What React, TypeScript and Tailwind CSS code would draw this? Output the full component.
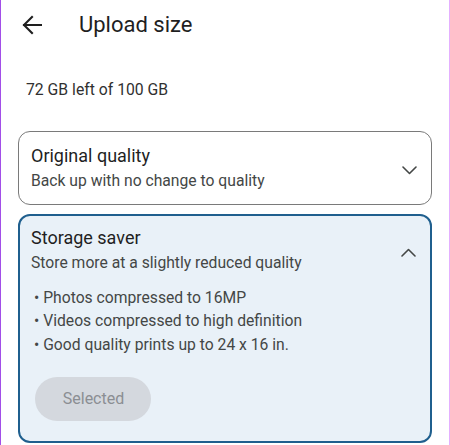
const bullets = [
  "Photos compressed to 16MP",
  "Videos compressed to high definition",
  "Good quality prints up to 24 x 16 in.",
];

function Chevron({ up }: { up?: boolean }) {
  return (
    <svg width="15" height="9" viewBox="0 0 15 9" fill="none" className="text-[#444746]">
      <polyline
        points={up ? "1,8 7.5,1.5 14,8" : "1,1 7.5,7.5 14,1"}
        stroke="currentColor"
        strokeWidth="1.6"
        strokeLinecap="round"
        strokeLinejoin="round"
      />
    </svg>
  );
}

export default function App() {
  return (
    <div className="h-[445px] w-[450px] overflow-hidden border-l border-r border-l-[#a24ee8] border-r-[#e4b0ff] bg-white font-['Roboto',sans-serif] text-[#1f1f1f]">
      <div className="flex h-[48px] items-center pl-[21px] pt-[1px]">
        <svg width="20" height="20" viewBox="0 0 20 20" fill="none" className="text-[#1f1f1f]">
          <path
            d="M19 10H2M10 2L2 10L10 18"
            stroke="currentColor"
            strokeWidth="2.1"
            strokeLinecap="square"
          />
        </svg>
        <h1 className="ml-[37px] text-[22px] leading-none">Upload size</h1>
      </div>

      <p className="mt-[34px] pl-[25px] text-[15.75px] leading-none text-[#303030]">
        72 GB left of 100 GB
      </p>

      <div className="mt-[33px] px-[17px]">
        <div className="flex items-center justify-between rounded-[12px] border border-[#7a7a7a] pb-[13px] pl-[12px] pr-[14px] pt-[13px]">
          <div>
            <div className="text-[18px] leading-[22px]">Original quality</div>
            <div className="mt-[4px] text-[15.7px] leading-[20px] text-[#444746]">
              Back up with no change to quality
            </div>
          </div>
          <div className="mt-[6px]">
            <Chevron />
          </div>
        </div>

        <div className="mt-[9px] h-[229px] rounded-[12px] border-2 border-[#1f5f8e] bg-[#e9f1f8] pl-[11px] pr-[14px] pt-[11px]">
          <div className="flex items-start justify-between">
            <div>
              <div className="text-[18px] leading-[22px]">Storage saver</div>
              <div className="mt-[4px] text-[15.7px] leading-[20px] text-[#444746]">
                Store more at a slightly reduced quality
              </div>
            </div>
            <div className="mt-[21px]">
              <Chevron up />
            </div>
          </div>
          <ul className="mt-[13px] pl-[3px] text-[15.7px] leading-[23.5px] text-[#444746]">
            {bullets.map((b) => (
              <li key={b}>• {b}</li>
            ))}
          </ul>
          <button className="ml-[4px] mt-[21px] h-[44px] w-[116px] rounded-full bg-[#d4d8de] pl-[1px] text-[16px] text-[#8b8e93]">
            Selected
          </button>
        </div>
      </div>
    </div>
  );
}
